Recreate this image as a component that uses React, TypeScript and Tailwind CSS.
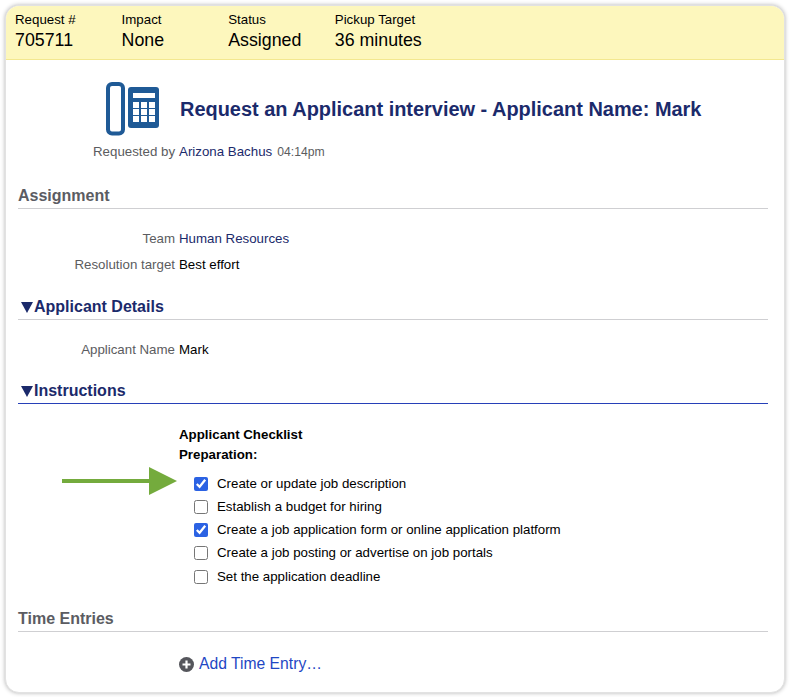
import React from 'react';

const font = { fontFamily: '"Liberation Sans", Arial, sans-serif' };

const PhoneIcon = () => (
  <svg width="54" height="55" viewBox="0 0 54 55" className="shrink-0">
    <rect x="2" y="3" width="15" height="49.5" rx="4" fill="#fff" stroke="#1f5a96" strokeWidth="4" />
    <rect x="22" y="6" width="31" height="41" rx="3" fill="#1f5a96" />
    <rect x="27" y="12" width="22" height="5" fill="#fff" />
    {[21, 28, 35].map((y) => [27, 35, 43].map((x) => (
      <rect key={`${x}-${y}`} x={x} y={y} width="6" height="6" fill="#fff" />
    )))}
  </svg>
);

const Field = ({ label, children }: { label: string; children: React.ReactNode }) => (
  <div className="flex text-[13.3px] leading-[16px]">
    <div className="w-[157px] shrink-0 text-right text-[#5b5c60]">{label}</div>
    <div className="ml-1">{children}</div>
  </div>
);

const SectionHead = ({ title, open, active }: { title: string; open?: boolean; active?: boolean }) => (
  <div className={`flex items-center h-[25px] border-b text-[16px] font-bold ${active ? 'border-[#2740b8]' : 'border-[#cfcfd2]'} ${open ? 'text-[#1b2a6b]' : 'text-[#5b5c62]'}`}>
    {open && (
      <svg width="12" height="11" viewBox="0 0 12 11" className="ml-[3px] mr-[1px]">
        <path d="M0 0 H12 L6 11 Z" fill="#1b2a6b" />
      </svg>
    )}
    <span>{title}</span>
  </div>
);

const checklist = [
  { text: 'Create or update job description', done: true },
  { text: 'Establish a budget for hiring', done: false },
  { text: 'Create a job application form or online application platform', done: true },
  { text: 'Create a job posting or advertise on job portals', done: false },
  { text: 'Set the application deadline', done: false },
];

const headerItems = [
  ['Request #', '705711'],
  ['Impact', 'None'],
  ['Status', 'Assigned'],
  ['Pickup Target', '36 minutes'],
];

export default function App() {
  return (
    <div className="w-[790px] h-[697px] bg-white p-[5px] pb-[4px]" style={font}>
      <div className="h-full rounded-[14px] bg-white overflow-hidden border border-[#e2e2e2] shadow-[0_0_4px_rgba(0,0,0,0.3)] text-black">
        <div className="flex h-[54px] pl-[9px] pt-[6px] bg-[#fdf7bd] border-b border-[#f3e88f]">
          {headerItems.map(([label, value]) => (
            <div key={label} className="w-[106.6px]">
              <div className="text-[13.3px] leading-[16px]">{label}</div>
              <div className="text-[17.8px] leading-[24px]">{value}</div>
            </div>
          ))}
        </div>

        <div className="flex items-center pl-[100px] mt-[21px]">
          <PhoneIcon />
          <h1 className="ml-[20px] text-[19.95px] leading-[24px] font-bold text-[#1b2a6b] whitespace-nowrap">
            Request an Applicant interview - Applicant Name: Mark
          </h1>
        </div>
        <div className="flex items-baseline pl-[87px] mt-[8px] text-[13.3px] leading-[16px] text-[#5b5c60]">
          <span>Requested by</span>
          <span className="ml-[4px] text-[#1b2a6b]">Arizona Bachus</span>
          <span className="ml-[5px] text-[12.2px]">04:14pm</span>
        </div>

        <div className="pl-[12px] pr-[16px]">
          <div className="mt-[24px]"><SectionHead title="Assignment" /></div>
          <div className="mt-[22px]">
            <Field label="Team"><span className="text-[#1b2a6b]">Human Resources</span></Field>
          </div>
          <div className="mt-[10px]">
            <Field label="Resolution target">Best effort</Field>
          </div>

          <div className="mt-[22px]"><SectionHead title="Applicant Details" open /></div>
          <div className="mt-[22px]">
            <Field label="Applicant Name">Mark</Field>
          </div>

          <div className="mt-[21px]"><SectionHead title="Instructions" open active /></div>

          <div className="pl-[161px] mt-[21px] text-[13.3px] leading-[20px] font-bold">
            <div>Applicant Checklist</div>
            <div>Preparation:</div>
          </div>

          <div className="relative pl-[176px] mt-[7px] text-[13.3px]">
            <svg width="116" height="28" viewBox="0 0 116 28" className="absolute left-[44px] top-[-5px]">
              <path d="M0 12 H87 V0 L115 14 L87 28 V16 H0 Z" fill="#74ab3d" />
            </svg>
            {checklist.map((item) => (
              <label key={item.text} className="flex items-center h-[23.25px]">
                <input
                  type="checkbox"
                  defaultChecked={item.done}
                  className="w-[14px] h-[14px] m-0 accent-[#2b62e3]"
                />
                <span className="ml-[9px]">{item.text}</span>
              </label>
            ))}
          </div>

          <div className="mt-[19px]"><SectionHead title="Time Entries" /></div>

          <div className="flex items-center pl-[161px] mt-[22px]">
            <svg width="15" height="15" viewBox="0 0 15 15">
              <circle cx="7.5" cy="7.5" r="7.5" fill="#55565c" />
              <path d="M7.5 3.5 V11.5 M3.5 7.5 H11.5" stroke="#fff" strokeWidth="2.2" />
            </svg>
            <span className="ml-[5px] text-[15.7px] leading-[20px] text-[#1f47c4]">Add Time Entry…</span>
          </div>
        </div>
      </div>
    </div>
  );
}
